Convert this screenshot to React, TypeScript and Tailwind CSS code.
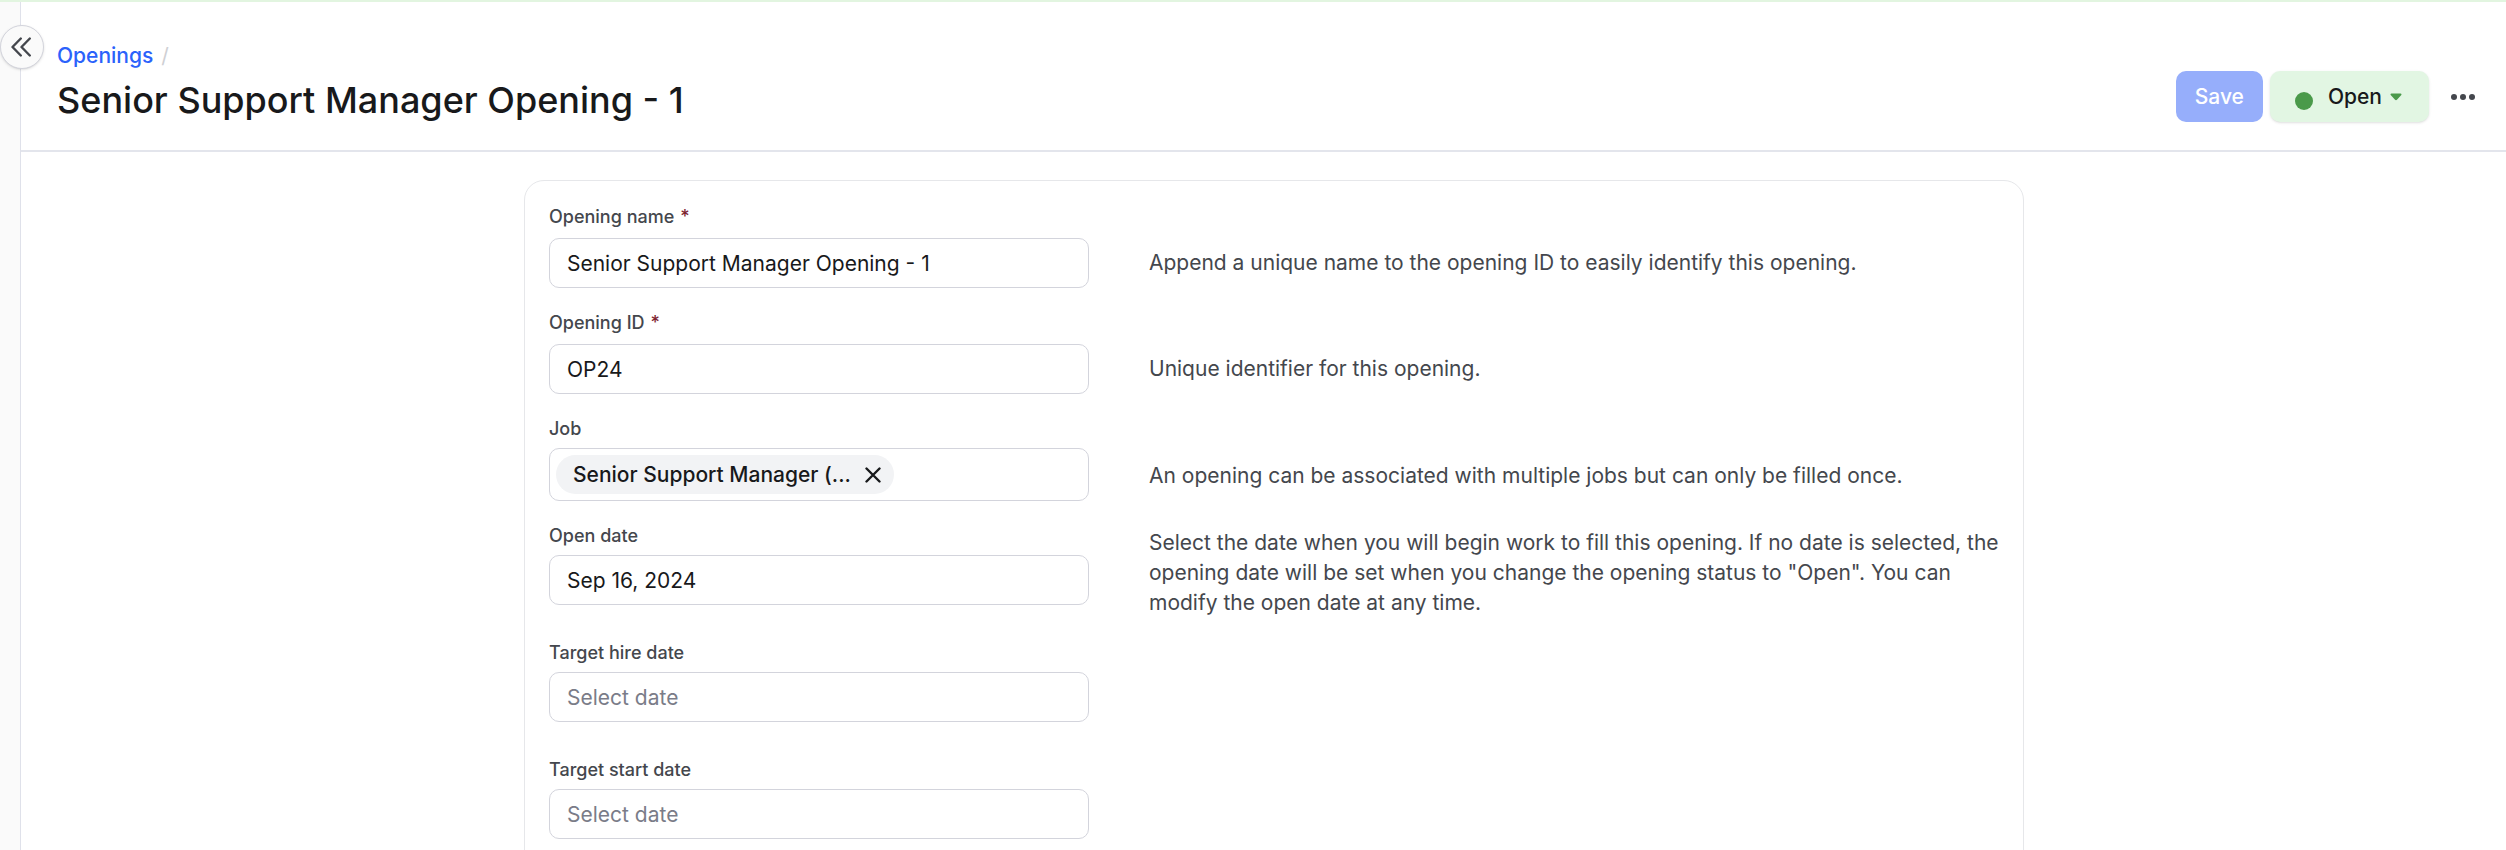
import React, { useState } from "react";
import clsx from "clsx";

type FieldProps = {
  id: string;
  label: string;
  required?: boolean;
  description?: string;
  date?: boolean;
  children: React.ReactNode;
};

const inputClass =
  "block h-[50px] w-full rounded-[10px] border border-[#d3d4dc] bg-white px-[17px] text-[21px] text-[#18191b] placeholder:text-[#7a7c88] placeholder:opacity-100 focus:outline-blue-500";

const Field: React.FC<FieldProps> = ({ id, label, required, description, date, children }) => (
  <div className={clsx("grid grid-cols-[540px_1fr] gap-x-[60px]", date && "min-h-[94px]")}>
    <div>
      <label
        htmlFor={id}
        className={clsx(
          "block text-[18px] leading-6 font-medium text-[#44474d]",
          required ? "mb-[9px]" : "mb-[7px]"
        )}
      >
        {label}
        {required && <span className="ml-[6px] text-[#7d2430]">*</span>}
      </label>
      {children}
    </div>
    {description && (
      <p
        className={clsx(
          "self-end text-[21px] leading-[30px] text-[#44474d]",
          !date && "pb-[10px]"
        )}
      >
        {description}
      </p>
    )}
  </div>
);

const App: React.FC = () => {
  const [name, setName] = useState("Senior Support Manager Opening - 1");
  const [openingId, setOpeningId] = useState("OP24");
  const [jobs, setJobs] = useState(["Senior Support Manager (..."]);
  const [openDate, setOpenDate] = useState("Sep 16, 2024");
  const [hireDate, setHireDate] = useState("");
  const [startDate, setStartDate] = useState("");

  return (
    <div className="flex h-screen flex-col overflow-hidden border-t-2 border-[#e2f5e0] bg-white font-['Inter',sans-serif]">
      <div className="flex min-h-0 flex-1">
        {/* Collapsed sidebar */}
        <aside className="relative w-[21px] shrink-0 border-r border-[#dfe1ea] bg-[#fafafa]">
          <button
            aria-label="Collapse sidebar"
            className="absolute top-[23px] left-0 z-10 flex size-11 items-center justify-center rounded-full border border-[#d3d4dc] bg-[#fafafa] pr-[2px] shadow-sm"
          >
            <svg viewBox="0 0 20 20" className="size-5" fill="none" stroke="#44474d" strokeWidth="2.4" strokeLinecap="round" strokeLinejoin="round">
              <path d="M9.800 1.500 1.500 10l8.300 8.500M18.800 1.500 10.500 10l8.300 8.500" />
            </svg>
          </button>
        </aside>

        <div className="flex min-w-0 flex-1 flex-col">
          {/* Header */}
          <header className="flex shrink-0 items-start justify-between border-b-2 border-[#e3e5ec] pt-[39px] pr-[27px] pb-[27px] pl-9">
            <div>
              <nav aria-label="Breadcrumb" className="text-[21px] leading-[30px]">
                <a href="#openings" className="font-medium text-[#2b62fb]">Openings</a>
                <span className="ml-2 text-[#cfd0d4]">/</span>
              </nav>
              <h1 className="mt-[6px] text-[36px] leading-[46px] font-medium text-[#18191b]">{name}</h1>
            </div>
            <div className="mt-[30px] flex items-center">
              <button disabled className="h-[51px] rounded-[10px] bg-[#96aefb] px-[19px] text-[21px] font-medium text-white">
                Save
              </button>
              <button className="ml-[7px] flex h-[51px] items-center rounded-[10px] bg-[#e2f6e3] pr-[27px] pl-[25px] text-[21px] font-medium text-[#18191b] shadow-sm">
                <span className="mt-2 mr-[15px] size-[18px] rounded-full bg-[#4a9a4a]" />
                Open
                <svg viewBox="0 0 12 8" className="ml-2 h-2 w-3" fill="#4a9a4a">
                  <path d="M1.500.500h9c1 0 1.300 1 .600 1.700L7.200 6.600a1.700 1.700 0 0 1-2.400 0L.900 2.200C.200 1.500.500.500 1.500.500Z" />
                </svg>
              </button>
              <button aria-label="More actions" className="ml-[18px] px-1 py-2">
                <svg viewBox="0 0 24 6" className="h-[6px] w-6" fill="#44474d">
                  <circle cx="3" cy="3" r="3" />
                  <circle cx="12" cy="3" r="3" />
                  <circle cx="21" cy="3" r="3" />
                </svg>
              </button>
            </div>
          </header>

          {/* Form */}
          <main className="min-h-0 flex-1 overflow-hidden pt-7 pl-[21px]">
            <form className="mx-auto flex max-w-[1500px] flex-col gap-[23px] rounded-[20px] border border-[#e6e7ea] px-6 pt-6 pb-12">
              <Field id="name" label="Opening name" required description="Append a unique name to the opening ID to easily identify this opening.">
                <input id="name" className={inputClass} value={name} onChange={(e) => setName(e.target.value)} />
              </Field>
              <Field id="opening-id" label="Opening ID" required description="Unique identifier for this opening.">
                <input id="opening-id" className={inputClass} value={openingId} onChange={(e) => setOpeningId(e.target.value)} />
              </Field>
              <Field id="job" label="Job" description="An opening can be associated with multiple jobs but can only be filled once.">
                <div className="flex h-[53px] items-center rounded-[10px] border border-[#d3d4dc] px-[6px]">
                  {jobs.map((job) => (
                    <span key={job} className="flex h-[39px] items-center rounded-full bg-[#f2f3f5] pr-[13px] pl-[17px] text-[21px] font-medium whitespace-nowrap text-[#18191b]">
                      {job}
                      <button
                        type="button"
                        aria-label={`Remove ${job}`}
                        onClick={() => setJobs(jobs.filter((j) => j !== job))}
                        className="ml-[14px]"
                      >
                        <svg viewBox="0 0 16 16" className="size-4" fill="none" stroke="currentColor" strokeWidth="2.400" strokeLinecap="round">
                          <path d="m1.500 1.500 13 13M14.500 1.500l-13 13" />
                        </svg>
                      </button>
                    </span>
                  ))}
                  <input id="job" className="min-w-0 flex-1 bg-transparent px-2 text-[21px] outline-none" />
                </div>
              </Field>
              <Field
                id="open-date"
                label="Open date"
                date
                description={'Select the date when you will begin work to fill this opening. If no date is selected, the opening date will be set when you change the opening status to "Open". You can modify the open date at any time.'}
              >
                <input id="open-date" className={inputClass} value={openDate} onChange={(e) => setOpenDate(e.target.value)} />
              </Field>
              <Field id="hire-date" label="Target hire date" date>
                <input id="hire-date" placeholder="Select date" className={inputClass} value={hireDate} onChange={(e) => setHireDate(e.target.value)} />
              </Field>
              <Field id="start-date" label="Target start date" date>
                <input id="start-date" placeholder="Select date" className={inputClass} value={startDate} onChange={(e) => setStartDate(e.target.value)} />
              </Field>
            </form>
          </main>
        </div>
      </div>
    </div>
  );
};

export default App;
